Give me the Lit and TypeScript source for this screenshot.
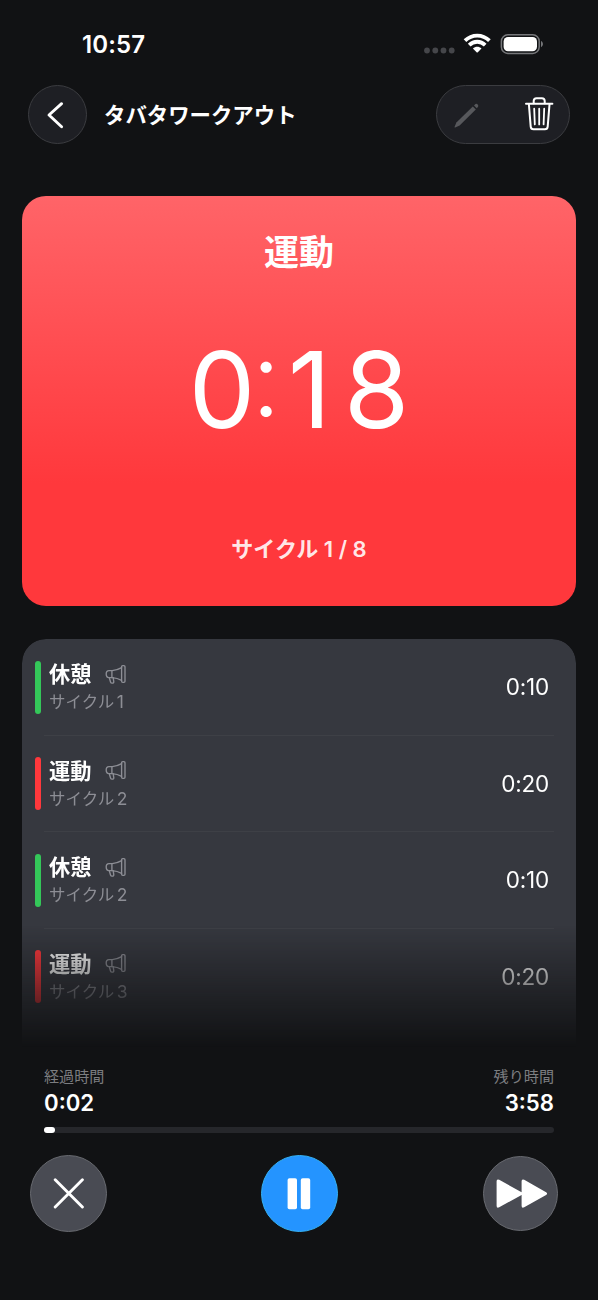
import { LitElement, html, css, svg } from "lit";
import { customElement } from "lit/decorators.js";

interface Interval {
  name: string;
  cycle: string;
  time: string;
  kind: "work" | "rest";
}

const intervals: Interval[] = [
  { name: "休憩", cycle: "1", time: "0:10", kind: "rest" },
  { name: "運動", cycle: "2", time: "0:20", kind: "work" },
  { name: "休憩", cycle: "2", time: "0:10", kind: "rest" },
  { name: "運動", cycle: "3", time: "0:20", kind: "work" },
];

const progress = 2.1;

const megaphone = html`<svg class="mega" width="22" height="22" viewBox="0 0 22 22">
  ${svg`<g fill="none" stroke="currentColor" stroke-width="1.35" stroke-linejoin="round" stroke-linecap="round">
    <rect x="16.6" y="1.6" width="3.4" height="16.8" rx="1.1"/>
    <path d="M16.6 3.6 C13.5 5.4 10.5 6.4 7.2 6.6 H4 C2.2 6.6 1.2 8 1.2 10.1 C1.2 12.2 2.2 13.6 4 13.6 H7.2 C10.5 13.8 13.5 14.6 16.6 16.4"/>
    <path d="M6.9 6.6 V13.6"/>
    <path d="M4.3 13.8 L5.6 18.2 C6.1 19.6 9 19.4 8.8 17.8 L8.2 13.8"/>
  </g>`}
</svg>`;

@customElement("app-root")
export class AppRoot extends LitElement {
  static styles = css`
    :host {
      display: block;
      height: 1300px;
      background: #111214;
      color: #fff;
      font-family: Inter, "Noto Sans CJK JP", sans-serif;
      overflow: hidden;
    }
    * { box-sizing: border-box; }
    svg { display: block; }
    .screen { display: flex; flex-direction: column; height: 1300px; }
    .status {
      height: 85px;
      padding: 5px 55px 0 82px;
      display: flex;
      align-items: center;
      justify-content: space-between;
      flex: none;
    }
    .clock { font-size: 24px; font-weight: 600; letter-spacing: 0.1px; line-height: 30px; }
    .nav {
      height: 59px;
      margin: 0 28px 52px;
      display: flex;
      align-items: center;
      flex: none;
    }
    .glass { background: #1e1f24; border: 1px solid #3b3c40; }
    .back {
      width: 59px;
      height: 59px;
      border-radius: 50%;
      display: grid;
      place-items: center;
    }
    .title {
      font-size: 21.4px;
      font-weight: 600;
      line-height: 30px;
      margin-left: 17px;
      padding-top: 1px;
      flex: 1;
      white-space: nowrap;
    }
    .pill { width: 134px; height: 59px; border-radius: 30px; }
    .card {
      margin: 0 22px 33px;
      height: 410px;
      flex: none;
      border-radius: 24px;
      background: linear-gradient(180deg, #ff6468 0%, #ff383c 70%);
      display: flex;
      flex-direction: column;
      align-items: center;
    }
    .phase { margin-top: 31px; font-size: 35px; line-height: 50px; font-weight: 700; }
    .count {
      margin-top: 53px;
      font-size: 105.5px;
      line-height: 120px;
      white-space: nowrap;
    }
    .zero { letter-spacing: -4px; }
    .colon {
      letter-spacing: 7px;
      font-weight: 300;
      font-feature-settings: "case";
    }
    .one { letter-spacing: 13px; }
    .of {
      margin-top: 84px;
      font-size: 22px;
      line-height: 30px;
      font-weight: 600;
      color: rgba(255, 255, 255, 0.9);
      white-space: pre;
    }
    .list {
      margin: 0 22px;
      height: 411px;
      flex: none;
      border-radius: 24px 24px 0 0;
      background: #36383f;
      overflow: hidden;
      -webkit-mask-image: linear-gradient(180deg, #000 0, #000 286px, transparent 408px);
      mask-image: linear-gradient(180deg, #000 0, #000 286px, transparent 408px);
    }
    .row {
      height: 96.5px;
      padding: 0 27px 0 13px;
      display: flex;
      align-items: center;
    }
    .sep { height: 1px; margin: -1px 22px 0; background: #3e4046; }
    .mark { width: 6px; height: 53px; border-radius: 3px; margin-right: 8px; }
    .rest { background: #34c759; }
    .work { background: #ff383c; }
    .info { flex: 1; padding-top: 1px; }
    .name { display: flex; align-items: center; font-size: 21.2px; font-weight: 700; line-height: 29px; height: 29px; }
    .mega { color: #8d8e95; margin-left: 14px; }
    .sub { font-size: 16.5px; line-height: 26px; color: #8d8e95; display: flex; }
    .sub .n { margin-left: 2.5px; font-size: 17.5px; }
    .dur { font-size: 22.5px; letter-spacing: -0.2px; line-height: 30px; }
    .totals { margin: 17px 44px 0; display: flex; justify-content: space-between; flex: none; }
    .right { text-align: right; }
    .label { font-size: 15.1px; line-height: 20px; color: #7c7d80; }
    .value { font-size: 22.2px; line-height: 32px; font-weight: 600; }
    .track { height: 6px; border-radius: 3px; background: #26272b; margin: 8px 44px 0; flex: none; }
    .fill { height: 6px; border-radius: 3px; background: #fff; }
    .controls {
      margin: 22px 40px 0 30px;
      display: grid;
      grid-template-columns: 1fr auto 1fr;
      align-items: center;
      flex: none;
    }
    .btn {
      width: 77px;
      height: 77px;
      border-radius: 50%;
      background: #494b53;
      border: 1px solid #686a70;
      display: grid;
      place-items: center;
    }
    .pause { background: #2494ff; border-color: #35b2f5; margin-left: 10px; }
    .skip { width: 75px; height: 75px; justify-self: end; }
  `;

  private renderRow(item: Interval, index: number) {
    return html`
      ${index ? html`<div class="sep"></div>` : ""}
      <div class="row">
        <div class="mark ${item.kind}"></div>
        <div class="info">
          <div class="name">${item.name}${megaphone}</div>
          <div class="sub">サイクル<span class="n">${item.cycle}</span></div>
        </div>
        <div class="dur">${item.time}</div>
      </div>
    `;
  }

  render() {
    return html`
      <div class="screen">
        <div class="status">
          <span class="clock">10:57</span>
          <svg width="120" height="24" viewBox="0 0 120 24">
            <g fill="#45464a">
              <circle cx="4" cy="17.5" r="2.9"/><circle cx="12.3" cy="17.5" r="2.9"/>
              <circle cx="20.5" cy="17.5" r="2.9"/><circle cx="28.7" cy="17.5" r="2.9"/>
            </g>
            <g fill="none" stroke="#fff" stroke-width="3.8">
              <path d="M42 7.7 C49 0.9 59.5 0.9 66.4 7.7"/>
              <path d="M46.2 12.1 C50.8 7.6 57.6 7.6 62.2 12.1"/>
            </g>
            <path d="M49.9 15.4 C52.3 13.1 56.1 13.1 58.5 15.4 L54.8 19.3 Q54.2 19.8 53.6 19.3 Z" fill="#fff"/>
            <rect x="78.4" y="1.8" width="37.8" height="18.6" rx="6.4" fill="none" stroke="#76777a" stroke-width="1.5"/>
            <rect x="80.6" y="4" width="33.4" height="14.2" rx="4.4" fill="#fff"/>
            <path d="M118 8 C120.6 9 120.6 13.2 118 14.2 Z" fill="#76777a"/>
          </svg>
        </div>
        <div class="nav">
          <div class="back glass">
            <svg width="57" height="57" viewBox="0 0 57 57">
              <path d="M32.6 17.7 L20 29 L32.6 40.7" fill="none" stroke="#fff" stroke-width="2.9" stroke-linecap="round" stroke-linejoin="round"/>
            </svg>
          </div>
          <div class="title">タバタワークアウト</div>
          <div class="pill glass">
            <svg width="132" height="57" viewBox="0 0 132 57">
              <g fill="#57585c">
                <path d="M17.4 41.2 L19.4 36.5 L35.8 20.5 L38.8 23.5 L22.6 39.6 L18.2 41.6 Z"/>
                <path d="M37 19.4 L38.5 18.1 Q39.6 17.3 40.7 18.4 Q41.8 19.6 41 20.7 L39.8 22.2 Z"/>
              </g>
              <g fill="none" stroke="#fff" stroke-width="2" stroke-linecap="round" stroke-linejoin="round">
                <path d="M89 17.8 H115.4"/>
                <path d="M96.7 17.3 V15 Q96.7 12.2 99.5 12.2 H104.9 Q107.7 12.2 107.7 15 V17.3"/>
                <path d="M91.9 18.3 L93.7 40.6 Q93.9 43.2 96.5 43.2 H107.9 Q110.5 43.2 110.7 40.6 L112.5 18.3"/>
                <path d="M97.2 22.7 L97.8 38.4 M102.2 22.7 V38.4 M107.2 22.7 L106.6 38.4" stroke-width="1.8"/>
              </g>
            </svg>
          </div>
        </div>
        <div class="card">
          <div class="phase">運動</div>
          <div class="count"><span class="zero">0</span><span class="colon">:</span><span class="one">1</span>8</div>
          <div class="of">サイクル 1 / 8</div>
        </div>
        <div class="list">${intervals.map((item, i) => this.renderRow(item, i))}</div>
        <div class="totals">
          <div>
            <div class="label">経過時間</div>
            <div class="value">0:02</div>
          </div>
          <div class="right">
            <div class="label">残り時間</div>
            <div class="value">3:58</div>
          </div>
        </div>
        <div class="track"><div class="fill" style="width:${progress}%"></div></div>
        <div class="controls">
          <div class="btn">
            <svg width="32" height="32" viewBox="0 0 32 32">
              <path d="M2.2 1.8 L29.4 29 M29.4 1.8 L2.2 29" stroke="#fff" stroke-width="2.9" stroke-linecap="round"/>
            </svg>
          </div>
          <div class="btn pause">
            <svg width="24" height="32" viewBox="0 0 24 32" fill="#fff">
              <rect x="0.6" y="0.2" width="9.4" height="31" rx="1.8"/>
              <rect x="13.8" y="0.2" width="9.4" height="31" rx="1.8"/>
            </svg>
          </div>
          <div class="btn skip">
            <svg width="52" height="32" viewBox="0 0 52 32" fill="#fff">
              <path d="M1.6 3.3 Q1.6 0.7 4.2 1.8 L26.6 14.2 V3.3 Q26.6 0.7 29.2 1.8 L51.1 14.2 Q53.1 15.6 51.1 17 L29.2 29.3 Q26.6 30.5 26.6 27.8 V17 L4.2 29.3 Q1.6 30.5 1.6 27.8 Z"/>
            </svg>
          </div>
        </div>
      </div>
    `;
  }
}
